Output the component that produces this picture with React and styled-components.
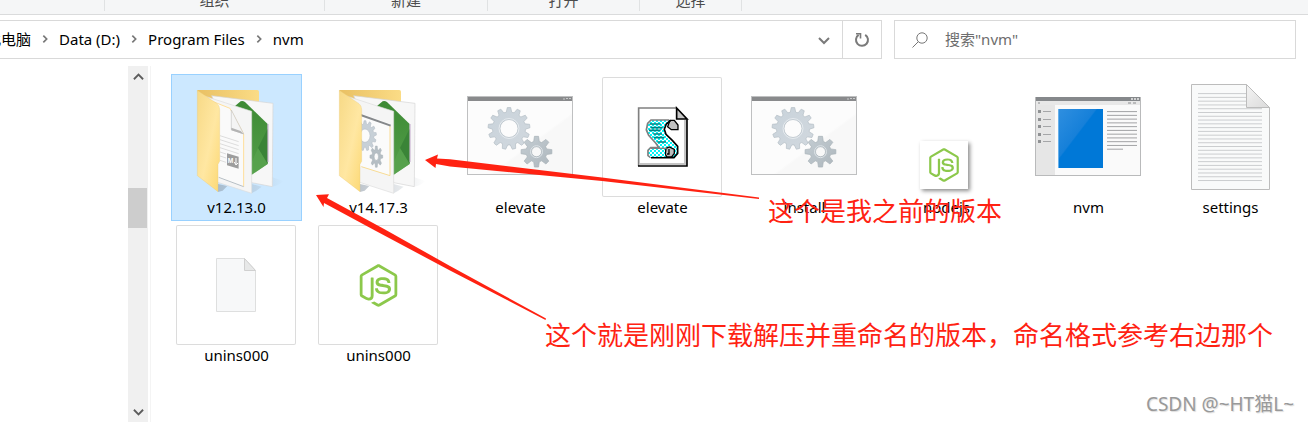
import React from "react";
import styled, { createGlobalStyle } from "styled-components";
import { FaNodeJs } from "react-icons/fa";

const ribbonGroups = [
  { name: "", width: 105 },
  { name: "组织", width: 220 },
  { name: "新建", width: 163 },
  { name: "打开", width: 152 },
  { name: "选择", width: 102 },
];

const crumbs = ["此电脑", "Data (D:)", "Program Files", "nvm"];

const gearPath = (cx, cy, outer, root, hole, teeth) => {
  const step = (Math.PI * 2) / teeth;
  const at = (r, a) =>
    `${(cx + r * Math.sin(a)).toFixed(2)} ${(cy - r * Math.cos(a)).toFixed(2)}`;
  let d = "";
  for (let i = 0; i < teeth; i++) {
    const a = i * step;
    d += `${i ? "L" : "M"}${at(root, a - step * 0.34)}L${at(outer, a - step * 0.17)}`;
    d += `L${at(outer, a + step * 0.17)}L${at(root, a + step * 0.34)}`;
  }
  d += `ZM${cx - hole} ${cy}a${hole} ${hole} 0 1 0 ${hole * 2} 0a${hole} ${hole} 0 1 0 ${-hole * 2} 0Z`;
  return d;
};

const FolderIcon = ({ content }) => (
  <Drawing viewBox="0 0 120 120" aria-hidden="true">
    <defs>
      <linearGradient id={`back-${content}`} x1="0" x2="1" y1="0" y2="0">
        <stop offset="0" stopColor="#e9c063" />
        <stop offset="1" stopColor="#fbdc86" />
      </linearGradient>
      <linearGradient id={`front-${content}`} x1="0" x2="1" y1="0" y2="1">
        <stop offset="0" stopColor="#f7d986" />
        <stop offset=".55" stopColor="#ffe7a2" />
        <stop offset="1" stopColor="#fcd873" />
      </linearGradient>
      <linearGradient id={`green-${content}`} x1="0" x2="0" y1="0" y2="1">
        <stop offset="0" stopColor="#3d8a34" />
        <stop offset="1" stopColor="#549f4a" />
      </linearGradient>
      <linearGradient id={`shade-${content}`} x1="0" x2="1" y1="0" y2="0">
        <stop offset="0" stopColor="#8b98a5" stopOpacity=".55" />
        <stop offset="1" stopColor="#8b98a5" stopOpacity="0" />
      </linearGradient>
    </defs>
    <g transform="translate(-56 -17) scale(.3333)">
      <path d="M457 352l35 12-20 12-15 4zM395 372l30 8-16 12-14 8zM294 372l28 6-14 14-14 4z" fill={`url(#shade-${content})`} />
      <path d="M232 90H412q5 0 5 5V160H250z" fill={`url(#back-${content})`} />
      <path d="M275 107L459 130 457 380 395 368z" fill="#f7f7f7" stroke="#d4d4d4" strokeWidth="2" />
      <path d="M345 138L362 124Q368 121 375 126L443 192V312L394 345z" fill={`url(#green-${content})`} />
      <path d="M443 206L414 264 443 312z" fill="#3a8437" />
      <path d="M414 264L443 312 394 345V310z" fill="#5aa550" opacity=".6" />
      <path d="M444 192V306" stroke="#c3a8cc" strokeWidth="3" />
      <path d="M250 107L395 154V400L290 366z" fill="#f5f5f5" stroke="#dddddd" strokeWidth="2" />
      {content === "markdown" ? (
        <>
          <path d="M262 118L330 145 371 222V380L290 352z" fill="#fafafa" />
          <path d="M262 118L330 145 371 222V380" fill="none" stroke="#ffdf9b" strokeWidth="3" />
          <path d="M296 352L371 380" stroke="#b7bfc5" strokeWidth="3" />
          <path d="M334 150V209L371 222z" fill="#f4f4f4" stroke="#c6c6c6" strokeWidth="2" />
          <path d="M334 203V211L371 223 362 213z" fill="#b4b4b4" />
          <path d="M300 227L356 245M300 239L356 257M300 251L356 269M300 263L356 281M300 276L318 282M300 288L318 294M300 301L318 307" stroke="#dddddd" strokeWidth="3" />
          <path d="M321 280L356 290V326L321 316z" fill="#9d9d9d" />
          <path d="M348 294V313M343 306L348 315 354 309" fill="none" stroke="#fff" strokeWidth="3" />
          <text x="323" y="308" fontSize="20" fontWeight="700" fontFamily="Liberation Sans, sans-serif" fill="#fff">M</text>
        </>
      ) : (
        <>
          <path d="M294 160L386 192V347L294 318z" fill="#fbfbfb" />
          <path d="M384 198V347L298 320" fill="none" stroke="#f8dc95" strokeWidth="3" />
          <path d="M296 165L386 197" stroke="#85888b" strokeWidth="6" />
          <g transform="translate(309 227) scale(.76 1)">
            <path d={gearPath(0, 0, 45, 35, 20, 13)} fill="#c7d0d7" stroke="#b4bdc4" strokeWidth="2" fillRule="evenodd" />
          </g>
          <g transform="translate(343 290) scale(.6 1)">
            <path d={gearPath(0, 0, 32, 22, 11, 8)} fill="#b5bec4" stroke="#a7b0b6" strokeWidth="2" fillRule="evenodd" />
          </g>
        </>
      )}
      <path d="M232 91L291 131Q299 137 299 148V304L294 313V395L232 347z" fill={`url(#front-${content})`} stroke="#e9c976" strokeWidth="1" />
    </g>
  </Drawing>
);

const GearWindowIcon = () => (
  <Drawing viewBox="0 0 120 120" aria-hidden="true">
    <defs>
      <linearGradient id="pane" x1="0" x2="1" y1="0" y2="1">
        <stop offset=".6" stopColor="#fcfcfc" />
        <stop offset=".62" stopColor="#f8f8f8" />
      </linearGradient>
      <linearGradient id="gearBig" x1="0" x2="1" y1="0" y2="1">
        <stop offset="0" stopColor="#c9d3db" />
        <stop offset="1" stopColor="#d1d8de" />
      </linearGradient>
      <linearGradient id="gearSmall" x1="0" x2="1" y1="0" y2="1">
        <stop offset="0" stopColor="#c4cdd3" />
        <stop offset="1" stopColor="#aeb7bd" />
      </linearGradient>
    </defs>
    <rect x="7.5" y="19.5" width="105" height="78" fill="url(#pane)" stroke="#bfc0c1" />
    <rect x="8" y="20" width="104" height="4" fill="#898a8c" />
    <path d="M103 22h2M106 21.5h2M109 21.5h2" stroke="#c8c9ca" />
    <path d={gearPath(49, 51.5, 21, 16.5, 9, 13)} fill="url(#gearBig)" stroke="#b5bfc6" strokeWidth=".7" strokeLinejoin="round" fillRule="evenodd" />
    <circle cx="49" cy="51.5" r="10" fill="none" stroke="#e6ebef" />
    <path d={gearPath(76.5, 74.7, 15.5, 10.5, 5, 8)} fill="url(#gearSmall)" stroke="#a8b2b8" strokeWidth=".7" strokeLinejoin="round" fillRule="evenodd" />
    <circle cx="76.5" cy="74.7" r="6" fill="none" stroke="#dde3e7" />
  </Drawing>
);

const ScriptIcon = () => (
  <Drawing viewBox="0 0 120 120" aria-hidden="true">
    <defs>
      <pattern id="dither" width="12" height="12" patternUnits="userSpaceOnUse">
        <rect width="12" height="12" fill="#fff" />
        <path d="M0 0h6v6H0zM6 6h6v6H6z" fill="#00f4f8" />
      </pattern>
    </defs>
    <g transform="translate(-152 -7) scale(.3333)">
      <path d="M566 114H680L711 148V288H566z" fill="#fff" />
      <path d="M705 150V282H570" fill="none" stroke="#c4c4c4" strokeWidth="6" />
      <path d="M566 288V114H681" fill="none" stroke="#808080" strokeWidth="5" />
      <path d="M564 288H711V148" fill="none" stroke="#000" strokeWidth="5" />
      <path d="M680 114V147H711z" fill="#c6c6c6" stroke="#000" strokeWidth="5" />
      <path d="M602 150H662L648 164 642 185 652 203 673 222 684 230V250L670 264H602L594 257V242L604 234H626L617 219 603 205 592 188V164z" fill="url(#dither)" />
      <path d="M657 150H603L593 160 589 180 596 196 617 219 627 233H602L594 241V257L602 263" fill="none" stroke="#808080" strokeWidth="5" />
      <path d="M599 162H632M602 173H638M597 181H632M610 192H636M612 203H643M622 216H648" stroke="#008080" strokeWidth="5" />
      <path d="M660 151L673 151 684 165V179H664L653 170z" fill="#c1c1c1" stroke="#000" strokeWidth="4" />
      <path d="M662 151L649 162 643 178 648 193 667 211 683 229V250L672 263H603" fill="none" stroke="#000" strokeWidth="5" />
      <path d="M648 235L658 231 673 238V250L665 261H651L646 253z" fill="#bdbdbd" stroke="#000" strokeWidth="4" />
      <path d="M657 237V252H651" fill="none" stroke="#000" strokeWidth="4" />
      <path d="M599 238H645V260H600z" fill="url(#dither)" />
      <path d="M603 235H650" stroke="#808080" strokeWidth="4" />
    </g>
  </Drawing>
);

const AppWindowIcon = () => (
  <Drawing viewBox="0 0 120 120" aria-hidden="true">
    <defs>
      <linearGradient id="screen" x1="0" x2="1" y1="0" y2="1">
        <stop offset="0" stopColor="#2f8fe0" />
        <stop offset=".42" stopColor="#1680d9" />
        <stop offset=".44" stopColor="#0078d7" />
      </linearGradient>
    </defs>
    <rect x="7.5" y="20.5" width="105" height="78" fill="#fafafa" stroke="#b9babb" />
    <rect x="8" y="20" width="104" height="4" fill="#85888b" />
    <rect x="8" y="24" width="104" height="4" fill="#e8e8e8" />
    <rect x="8" y="28" width="19" height="70" fill="#e6e6e6" />
    <path d="M103 22h2M106 22h2M109 22h2" stroke="#d0d1d2" strokeWidth="2" />
    <path d="M10 26h2M100 26h3M105 26h3" stroke="#b9babb" strokeWidth="2" />
    {[34.5, 42.5, 49.5, 57.5, 64.5].map((y) => (
      <g key={y}>
        <rect x="10" y={y - 1.5} width="3" height="3" fill="#909294" />
        <path d={`M15 ${y}h8`} stroke="#a5a6a8" />
      </g>
    ))}
    <rect x="30" y="32" width="45" height="59" fill="url(#screen)" />
    <path d="M30.500 32v59" stroke="#65afea" />
    {[0, 1, 2, 3, 4, 5, 6, 7, 8, 9, 10].map((i) => (
      <path key={i} d={`M79 ${34.6 + i * 3.76}h${i === 10 ? 16 : 30}`} stroke="#a2a3a5" />
    ))}
  </Drawing>
);

const TextFileIcon = () => (
  <Drawing viewBox="0 0 120 120" aria-hidden="true">
    <defs>
      <linearGradient id="fold" x1="0" x2="1" y1="0" y2="1">
        <stop offset="0" stopColor="#f4f4f4" />
        <stop offset="1" stopColor="#dadada" />
      </linearGradient>
    </defs>
    <path d="M21.500 7.500H76.500L99.500 30.500V112.500H21.500z" fill="#f9fafa" stroke="#bcbcbc" />
    {Array.from({ length: 24 }, (_, i) => (
      <path key={i} d={`M28 ${16.6 + i * 3.78}h${i < 4 ? 48 : 64}`} stroke="#cbcdcf" />
    ))}
    <path d="M76.500 7.500L99.500 30.500H76.500z" fill="url(#fold)" stroke="#bcbcbc" />
  </Drawing>
);

const BlankFileIcon = () => (
  <Drawing viewBox="0 0 120 120" aria-hidden="true">
    <path d="M40.500 33.500H68.500L79.500 45.500V86.500H40.500z" fill="#f7f8f9" stroke="#dedfdf" />
    <path d="M68.500 33.500L79.500 45.500H68.500z" fill="#e7e8e8" stroke="#d0d0d0" />
  </Drawing>
);

const files = [
  { name: "v12.13.0", icon: <FolderIcon content="markdown" />, selected: true },
  { name: "v14.17.3", icon: <FolderIcon content="gears" /> },
  { name: "elevate", icon: <GearWindowIcon /> },
  { name: "elevate", icon: <ScriptIcon />, framed: true },
  { name: "install", icon: <GearWindowIcon /> },
  { name: "nodejs", icon: "picture", low: true },
  { name: "nvm", icon: <AppWindowIcon /> },
  { name: "settings", icon: <TextFileIcon /> },
  { name: "unins000", icon: <BlankFileIcon />, framed: true },
  { name: "unins000", icon: "node", framed: true },
];

const Chevron = ({ d, size = 12 }) => (
  <svg width={size} height={size} viewBox="0 0 12 12" aria-hidden="true">
    <path d={d} fill="none" stroke="currentColor" strokeWidth="2" />
  </svg>
);

const FileIcon = ({ icon }) => {
  if (icon === "node") return <NodeLogo size={43} />;
  if (icon === "picture")
    return (
      <Picture>
        <NodeLogo size={34} />
      </Picture>
    );
  return icon;
};

const App = () => {
  return (
    <>
      <GlobalStyle />
      <Page>
        <Ribbon>
          {ribbonGroups.map((group) => (
            <RibbonGroup key={group.width} $width={group.width}>
              {group.name}
            </RibbonGroup>
          ))}
        </Ribbon>

        <Toolbar>
          <AddressBar>
            <Crumbs aria-label="路径">
              {crumbs.map((crumb, i) => (
                <React.Fragment key={crumb}>
                  {i > 0 && (
                    <CrumbArrow>
                      <Chevron d="M4 2L8 6 4 10" size={10} />
                    </CrumbArrow>
                  )}
                  <Crumb href="#">{crumb}</Crumb>
                </React.Fragment>
              ))}
            </Crumbs>
            <BarButton aria-label="历史记录">
              <Chevron d="M1 4L6 9 11 4" />
            </BarButton>
            <BarButton aria-label="刷新" $divided>
              <svg width="16" height="16" viewBox="0 0 16 16" aria-hidden="true">
                <path d="M11.200 2.800A6 6 0 1 1 4.600 2.900" fill="none" stroke="currentColor" strokeWidth="2" />
                <path d="M2 1.700H6.500V6.500" fill="none" stroke="currentColor" strokeWidth="1.600" />
              </svg>
            </BarButton>
          </AddressBar>
          <SearchBox>
            <svg width="16" height="16" viewBox="0 0 16 16" aria-hidden="true">
              <circle cx="10" cy="6" r="5.200" fill="none" stroke="#777" />
              <path d="M6.300 9.700L.5 15.500" stroke="#777" />
            </svg>
            <SearchInput type="text" placeholder={'搜索"nvm"'} aria-label="搜索" />
          </SearchBox>
        </Toolbar>

        <Content>
          <Sidebar>
            <ScrollBar>
              <ScrollButton aria-label="向上滚动">
                <Chevron d="M1 9L6 4 11 9" size={11} />
              </ScrollButton>
              <ScrollTrack>
                <ScrollThumb />
              </ScrollTrack>
              <ScrollButton aria-label="向下滚动">
                <Chevron d="M1 3L6 8 11 3" size={11} />
              </ScrollButton>
            </ScrollBar>
          </Sidebar>
          <FileGrid>
            {files.map((file, i) => (
              <FileItem key={i} $selected={file.selected}>
                <Thumb $framed={file.framed} $low={file.low}>
                  <FileIcon icon={file.icon} />
                </Thumb>
                <FileName>{file.name}</FileName>
              </FileItem>
            ))}
          </FileGrid>
        </Content>

        <Arrows width="1308" height="422" viewBox="0 0 1308 422" aria-hidden="true">
          <path d="M425 160L438 154.500 437 158.500 450 159.300 602 177.500 759 197.500V199L602 181 450 166.500 436 164 435.500 168z" />
          <path d="M316 195L329 194.300 327 198 385 229.500 450 266 546 318.500 545.500 320 450 270.500 375 230.500 324 203 323.500 207z" />
        </Arrows>
        <Note $left={768} $top={192}>
          这个是我之前的版本
        </Note>
        <Note $left={545} $top={316}>
          这个就是刚刚下载解压并重命名的版本，命名格式参考右边那个
        </Note>
        <Watermark>CSDN @~HT猫L~</Watermark>
      </Page>
    </>
  );
};

const GlobalStyle = createGlobalStyle`
  * {
    box-sizing: border-box;
  }
  body {
    margin: 0;
    background-color: #fff;
    color: #000;
    font-family: "Noto Sans", "Noto Sans CJK SC", sans-serif;
    font-size: 15px;
    line-height: 20px;
  }
  button, input {
    font: inherit;
    border: none;
    outline: none;
    padding: 0;
    background: none;
  }
`;

const Page = styled.div`
  position: relative;
  display: flex;
  flex-direction: column;
  min-height: 100vh;
  overflow: hidden;
`;

const Drawing = styled.svg`
  width: 120px;
  height: 120px;
  flex: none;
`;
const NodeLogo = styled(FaNodeJs)`
  color: #8cc84b;
`;

const Ribbon = styled.div`
  display: flex;
  height: 15px;
  padding-bottom: 3px;
  background-color: #f5f6f7;
  border-bottom: 1px solid #dadbdc;
`;
const RibbonGroup = styled.div`
  display: flex;
  justify-content: center;
  align-items: flex-end;
  width: ${(props) => props.$width}px;
  height: 11px;
  padding-bottom: 1px;
  overflow: hidden;
  border-right: 1px solid #e0e2e3;
  color: #4c4c4c;
`;

const Toolbar = styled.div`
  display: flex;
  gap: 12px;
  padding: 5px 12px 0 0;
`;
const AddressBar = styled.div`
  display: flex;
  flex: 1;
  height: 39px;
  border: 1px solid #d9d9d9;
  border-left: none;
`;
const Crumbs = styled.nav`
  display: flex;
  align-items: center;
  flex: 1;
  margin-left: -14px;
  padding-bottom: 2px;
`;
const Crumb = styled.a`
  color: #000;
  text-decoration: none;
  white-space: nowrap;
`;
const CrumbArrow = styled.span`
  display: flex;
  justify-content: center;
  width: 28px;
  color: #777;
`;
const BarButton = styled.button`
  display: flex;
  align-items: center;
  justify-content: center;
  width: ${(props) => (props.$divided ? "39px" : "37px")};
  color: #7a7a7a;
  border-left: ${(props) => (props.$divided ? "1px solid #d9d9d9" : "none")};
`;
const SearchBox = styled.label`
  display: flex;
  align-items: center;
  gap: 17px;
  width: 402px;
  padding: 0 17px;
  border: 1px solid #d9d9d9;
`;
const SearchInput = styled.input`
  flex: 1;
  min-width: 0;
  padding-bottom: 2px;
  color: #000;
  &::placeholder {
    color: #6d6d6d;
    opacity: 1;
  }
`;

const Content = styled.div`
  display: flex;
  flex: 1;
  padding-top: 7px;
`;
const Sidebar = styled.aside`
  display: flex;
  justify-content: flex-end;
  flex: none;
  width: 151px;
  padding-right: 2px;
  border-right: 1px solid #f4f4f4;
`;
const ScrollBar = styled.div`
  display: flex;
  flex-direction: column;
  width: 20px;
  background-color: #f0f0f0;
`;
const ScrollButton = styled.button`
  display: flex;
  align-items: center;
  justify-content: center;
  height: 20px;
  color: #5c5c5c;
`;
const ScrollTrack = styled.div`
  display: grid;
  flex: 1;
  grid-template-rows: 102fr 40fr 174fr;
`;
const ScrollThumb = styled.div`
  grid-row: 2;
  margin-right: 1px;
  background-color: #cdcdcd;
`;

const FileGrid = styled.main`
  display: grid;
  flex: 1;
  grid-template-columns: repeat(auto-fill, 131px);
  align-content: start;
  gap: 1px 11px;
  padding: 8px 0 0 20px;
`;
const FileItem = styled.div`
  display: flex;
  flex-direction: column;
  align-items: center;
  padding: 2px 0 3px;
  border: 1px solid ${(props) => (props.$selected ? "#99d1ff" : "transparent")};
  background-color: ${(props) => (props.$selected ? "#cce8ff" : "transparent")};
`;
const Thumb = styled.div`
  display: flex;
  align-self: flex-start;
  align-items: ${(props) => (props.$low ? "flex-end" : "center")};
  justify-content: center;
  width: 120px;
  height: 120px;
  margin-left: 4px;
  padding: ${(props) => (props.$low ? "0 4px 8px 0" : "0")};
  border-radius: 2px;
  box-shadow: ${(props) => (props.$framed ? "inset 0 0 0 1px #dcdcdc" : "none")};
`;
const Picture = styled.div`
  display: flex;
  align-items: center;
  justify-content: center;
  width: 48px;
  height: 48px;
  background-color: #fff;
  box-shadow: 2px 2px 4px rgba(0, 0, 0, 0.45);
`;
const FileName = styled.span`
  white-space: nowrap;
`;

/* red marks drawn over the window */
const Arrows = styled.svg`
  position: absolute;
  top: 0;
  left: 0;
  fill: #ff2212;
  pointer-events: none;
`;
const Note = styled.p`
  position: absolute;
  left: ${(props) => props.$left}px;
  top: ${(props) => props.$top}px;
  margin: 0;
  color: #ff2212;
  font-size: 26px;
  line-height: 38px;
  white-space: nowrap;
`;
const Watermark = styled.span`
  position: absolute;
  right: 14px;
  bottom: 6px;
  color: #999;
  font-size: 19px;
  line-height: 24px;
  text-shadow: 1px 1px 1px #ddd;
`;

export default App;
